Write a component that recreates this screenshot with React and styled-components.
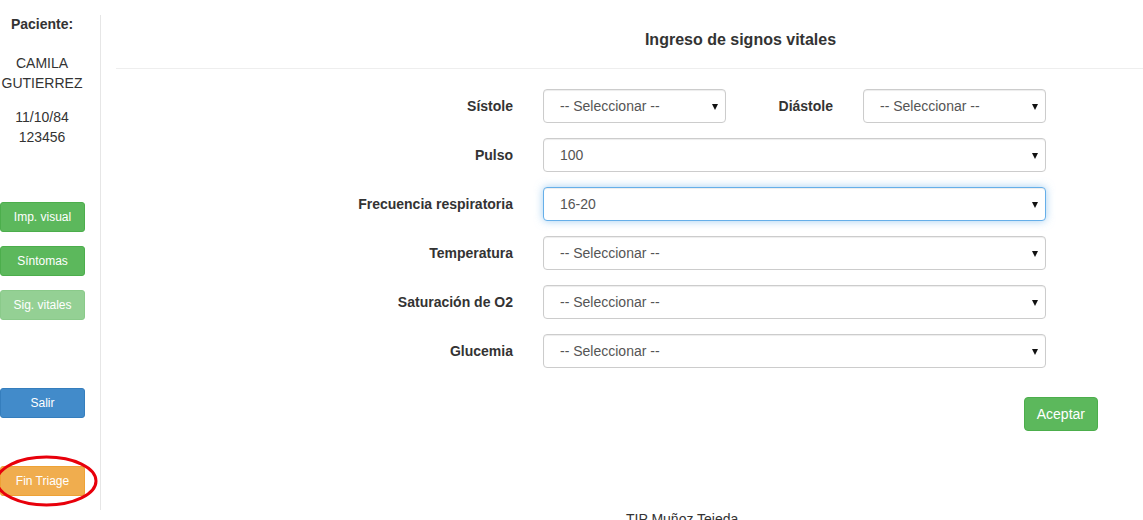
import React from "react";
import styled, { createGlobalStyle, css } from "styled-components";

const Global = createGlobalStyle`
  html, body { margin: 0; padding: 0; background: #fff; }
  body {
    font-family: "Liberation Sans", Arial, Helvetica, sans-serif;
    font-size: 14px;
    line-height: 20px;
    color: #333;
    overflow: hidden;
  }
  * { box-sizing: border-box; }
`;

const Page = styled.div`
  display: flex;
  width: 1143px;
  height: 520px;
  overflow: hidden;
`;

const Sidebar = styled.aside`
  flex: none;
  width: 101px;
  height: 495px;
  margin-top: 15px;
  padding-right: 16px;
  border-right: 1px solid #e6e6e6;
  display: flex;
  flex-direction: column;
  text-align: center;
  & > * { flex: none; }
`;

const PatientLabel = styled.div`
  font-weight: bold;
  margin-top: -1px;
`;

const PatientInfo = styled.div`
  margin-top: ${(p) => p.$top}px;
`;

const variants = {
  success: css`background: #5cb85c; border-color: #4cae4c;`,
  primary: css`background: #428bca; border-color: #357ebd;`,
  warning: css`background: #f0ad4e; border-color: #eea236;`,
};

const SideButton = styled.button`
  display: block;
  width: 85px;
  height: 30px;
  margin-top: ${(p) => p.$top || 0}px;
  padding: 5px 10px;
  font-family: inherit;
  font-size: 12px;
  line-height: 18px;
  color: #fff;
  border: 1px solid;
  border-radius: 3px;
  ${(p) => variants[p.$variant]};
  opacity: ${(p) => (p.$disabled ? 0.65 : 1)};
`;

const Annotated = styled.div`
  position: relative;
  width: 85px;
  margin-top: ${(p) => p.$top}px;
`;

const Ring = styled.svg`
  position: absolute;
  left: -5px;
  top: -11px;
  width: 103px;
  height: 52px;
  overflow: visible;
  pointer-events: none;
`;

const Main = styled.main`
  flex: 1;
  min-width: 0;
  padding-left: 15px;
  display: flex;
  flex-direction: column;
  & > * { flex: none; }
`;

const Header = styled.header`
  height: 69px;
  padding-top: 30px;
  padding-left: 222px;
  border-bottom: 1px solid #eeeeee;
  text-align: center;
`;

const Title = styled.h4`
  margin: 0;
  font-size: 16px;
  line-height: 20px;
  font-weight: bold;
  color: #333;
`;

const Form = styled.form`
  margin-top: 20px;
  width: 982px;
  display: flex;
  flex-direction: column;
  gap: 15px;
`;

const Row = styled.div`
  display: grid;
  grid-template-columns: 397px 503px;
  column-gap: 30px;
  align-items: center;
`;

const Label = styled.label`
  font-weight: bold;
  text-align: right;
  padding-right: ${(p) => p.$pad || 0}px;
`;

const Pair = styled.div`
  display: grid;
  grid-template-columns: 183px 1fr 183px;
  align-items: center;
`;

const SelectWrap = styled.div`
  position: relative;
  &::after {
    content: "";
    position: absolute;
    right: 8px;
    top: 15px;
    border-left: 3.5px solid transparent;
    border-right: 3.5px solid transparent;
    border-top: 6px solid #111;
    pointer-events: none;
  }
`;

const Select = styled.select`
  display: block;
  width: 100%;
  height: 34px;
  padding: 6px 24px 6px 16px;
  font-family: inherit;
  font-size: 14px;
  line-height: 20px;
  color: #555;
  background: #fff;
  border: 1px solid ${(p) => (p.$focus ? "#66afe9" : "#ccc")};
  border-radius: 4px;
  appearance: none;
  -webkit-appearance: none;
  outline: none;
  box-shadow: inset 0 1px 1px rgba(0, 0, 0, 0.075)
    ${(p) => (p.$focus ? ", 0 0 8px rgba(102, 175, 233, 0.6)" : "")};
`;

const Actions = styled.div`
  display: flex;
  justify-content: flex-end;
  margin-top: 14px;
`;

const Submit = styled.button`
  height: 34px;
  padding: 6px 12px;
  font-family: inherit;
  font-size: 14px;
  line-height: 20px;
  color: #fff;
  background: #5cb85c;
  border: 1px solid #4cae4c;
  border-radius: 4px;
`;

const Footer = styled.footer`
  margin-top: 78px;
  padding-left: 510px;
  white-space: nowrap;
`;

const Field = ({ value, focus }) => (
  <SelectWrap>
    <Select $focus={focus} defaultValue={value}>
      <option>{value}</option>
    </Select>
  </SelectWrap>
);

const rows = [
  { label: "Pulso", value: "100" },
  { label: "Frecuencia respiratoria", value: "16-20", focus: true },
  { label: "Temperatura", value: "-- Seleccionar --" },
  { label: "Saturación de O2", value: "-- Seleccionar --" },
  { label: "Glucemia", value: "-- Seleccionar --" },
];

export default function App() {
  return (
    <>
      <Global />
      <Page>
        <Sidebar>
          <PatientLabel>Paciente:</PatientLabel>
          <PatientInfo $top={19}>
            CAMILA
            <br />
            GUTIERREZ
          </PatientInfo>
          <PatientInfo $top={14}>
            11/10/84
            <br />
            123456
          </PatientInfo>
          <SideButton $variant="success" $top={55}>Imp. visual</SideButton>
          <SideButton $variant="success" $top={14}>Síntomas</SideButton>
          <SideButton $variant="success" $top={14} $disabled>Sig. vitales</SideButton>
          <SideButton $variant="primary" $top={68}>Salir</SideButton>
          <Annotated $top={48}>
            <SideButton $variant="warning">Fin Triage</SideButton>
            <Ring viewBox="0 0 103 52">
              <ellipse cx="51.5" cy="26" rx="49.5" ry="24" fill="none" stroke="#e8000b" strokeWidth="3" />
            </Ring>
          </Annotated>
        </Sidebar>
        <Main>
          <Header>
            <Title>Ingreso de signos vitales</Title>
          </Header>
          <Form>
            <Row>
              <Label>Sístole</Label>
              <Pair>
                <Field value="-- Seleccionar --" />
                <Label $pad={30}>Diástole</Label>
                <Field value="-- Seleccionar --" />
              </Pair>
            </Row>
            {rows.map((r) => (
              <Row key={r.label}>
                <Label>{r.label}</Label>
                <Field value={r.value} focus={r.focus} />
              </Row>
            ))}
            <Actions>
              <Submit type="button">Aceptar</Submit>
            </Actions>
          </Form>
          <Footer>TIP Muñoz Tejeda</Footer>
        </Main>
      </Page>
    </>
  );
}
